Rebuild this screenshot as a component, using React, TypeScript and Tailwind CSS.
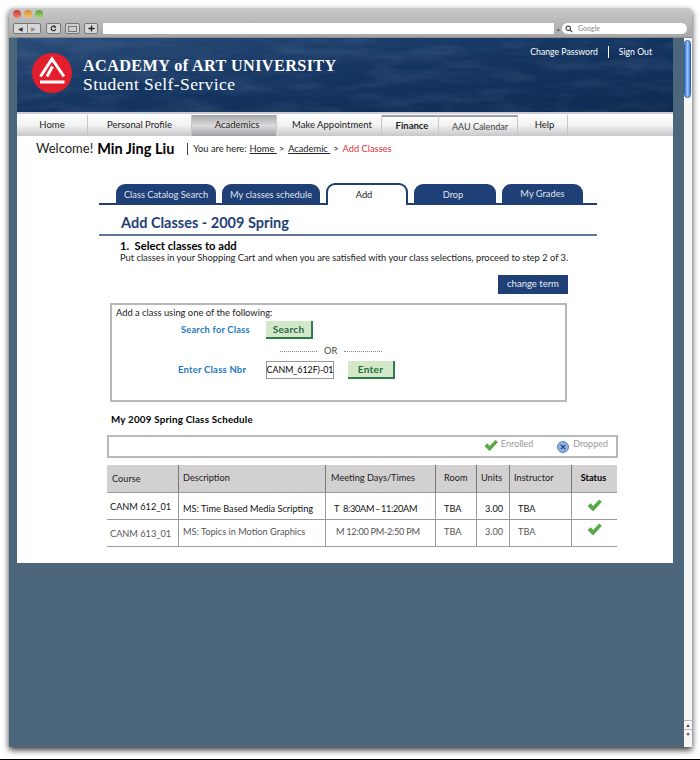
import * as React from 'react'

const sans = "font-['Lato',sans-serif]"

const navItems = [
  {label: 'Home', width: 'w-[71px]', className: ''},
  {label: 'Personal Profile', width: 'w-[104px]', className: ''},
  {label: 'Academics', width: 'w-[85px]', className: 'pl-[6px] bg-gradient-to-b from-[#a4a4a8] via-[#dcdcde] to-[#a0a0a4]'},
  {label: 'Make Appointment', width: 'w-[105px]', className: 'pl-[6px]'},
  {label: 'Finance', width: 'w-[57px]', className: 'pl-[4px] border-t-2 border-t-[#a0a0a0] font-bold'},
  {label: 'AAU Calendar', width: 'w-[79px]', className: 'pl-[4px] text-[9px] border-t-2 border-t-[#a0a0a0] text-[#444]'},
  {label: 'Help', width: 'w-[50px]', className: 'pl-[4px]'},
]

const tabs = [
  {label: 'Class Catalog Search', className: 'w-[100px] pt-[2px]'},
  {label: 'My classes schedule', className: 'w-[98px] pt-[2px]'},
  {label: 'Add', className: 'w-[82px] pr-[6px]', active: true},
  {label: 'Drop', className: 'w-[82px] pt-[3px] pr-[4px]'},
  {label: 'My Grades', className: 'w-[81px]'},
]

function Check({className}: {className?: string}) {
  return (
    <svg viewBox="0 0 16 14" className={className}>
      <path d="M1 7.5 L4 5 L6.5 8 L13 1 L15.5 3 L6.5 13 Z" fill="#55ad3f" stroke="#3b8a35" strokeWidth="0.6" />
    </svg>
  )
}

function GreenButton({label, className}: {label: string; className: string}) {
  return (
    <div
      className={`flex items-center justify-center border-b-2 border-r-2 border-[#2e7d4d] bg-[#d3e8c8] text-[10px] font-bold tracking-[0.3px] text-[#1f6b42] ${className}`}
    >
      {label}
    </div>
  )
}

function Row({
  cells,
  className,
  checkClassName,
}: {
  cells: [string, string, string, string, string, string]
  className: string
  checkClassName: string
}) {
  return (
    <div className={`flex h-[27px] items-center whitespace-pre border-t border-[#9a9a9a] text-[9.2px] ${className}`}>
      <div className="w-[71px] pl-[3px]">{cells[0]}</div>
      <div className="h-full w-[147px] border-l border-[#9a9a9a] pl-[4px]">{cells[1]}</div>
      <div className="h-full w-[110px] border-l border-[#9a9a9a] pl-[8px] tracking-[-0.3px]">{cells[2]}</div>
      <div className="h-full w-[41px] border-l border-[#9a9a9a] pl-[8px]">{cells[3]}</div>
      <div className="h-full w-[33px] border-l border-[#9a9a9a] pl-[8px]">{cells[4]}</div>
      <div className="h-full w-[62px] border-l border-[#9a9a9a] pl-[8px]">{cells[5]}</div>
      <div className={`flex h-full flex-1 items-center justify-center border-l border-[#9a9a9a] ${checkClassName}`}>
        <Check className="h-[13px] w-[15px]" />
      </div>
    </div>
  )
}

export default function App() {
  return (
    <div className={`h-[760px] w-[700px] overflow-hidden border-b border-black bg-white pl-[9px] pt-[8px] ${sans}`}>
      <div className="flex h-[739px] w-[683px] flex-col rounded-t-[4px] shadow-[0_3px_6px_rgba(0,0,0,0.8)]">
        <div className="flex h-[30px] shrink-0 flex-col justify-between rounded-t-[4px] border-b border-[#8a8a8a] bg-gradient-to-b from-[#c9c9c9] to-[#a8a8a8] pb-[3px] pl-[4px] pt-[2px]">
          <div className="flex gap-[3px]">
            <span className="h-[8px] w-[8px] rounded-full bg-gradient-to-b from-[#c9302a] to-[#f0837a]" />
            <span className="h-[8px] w-[8px] rounded-full bg-gradient-to-b from-[#d58a26] to-[#f3c56a]" />
            <span className="h-[8px] w-[8px] rounded-full bg-gradient-to-b from-[#55a32f] to-[#a5d97a]" />
          </div>
          <div className="flex items-center">
            <div className="flex h-[11px] w-[28px] rounded-[2px] border border-[#777] bg-[#d8d8d8] text-[#333]">
              <span className="flex-1 border-r border-[#888] text-center text-[6px] leading-[9px]">◀</span>
              <span className="flex-1 text-center text-[6px] leading-[9px] text-[#888]">▶</span>
            </div>
            <div className="ml-[5px] flex h-[11px] w-[15px] items-center justify-center rounded-[2px] border border-[#777] bg-[#d8d8d8]">
              <svg viewBox="0 0 10 10" className="h-[7px] w-[7px]">
                <path d="M7.6 2.8 A3.3 3.3 0 1 0 8.3 5.4" fill="none" stroke="#222" strokeWidth="1.6" />
                <path d="M6 0.5 L9 3.5 L5.5 4 Z" fill="#222" />
              </svg>
            </div>
            <div className="ml-[4px] flex h-[11px] w-[15px] items-center justify-center rounded-[2px] border border-[#777] bg-[#cfcfcf]">
              <div className="h-[6px] w-[9px] border border-[#777]" />
            </div>
            <div className="ml-[4px] flex h-[11px] w-[14px] items-center justify-center rounded-[2px] border border-[#777] bg-[#d8d8d8]">
              <svg viewBox="0 0 8 8" className="h-[7px] w-[7px]">
                <path d="M4 0.5 V7.5 M0.5 4 H7.5" stroke="#222" strokeWidth="1.5" />
              </svg>
            </div>
            <div className="ml-[5px] h-[11px] w-[451px] bg-white" />
            <div className="w-[8px] text-center text-[5px] leading-[6px] text-[#444]">▴</div>
            <div className="flex h-[11px] w-[125px] items-center rounded-full bg-white pl-[3px] text-[7px] text-[#888]">
              <svg viewBox="0 0 10 10" className="h-[8px] w-[8px]">
                <circle cx="4" cy="4" r="2.8" fill="none" stroke="#333" strokeWidth="1.3" />
                <path d="M6 6 L9 9" stroke="#333" strokeWidth="1.5" />
              </svg>
              <span className="ml-[5px]">Google</span>
            </div>
          </div>
        </div>

        <div className="flex min-h-0 flex-1 bg-[#4c677c]">
          <div className="ml-[8px] w-[656px] shrink-0">
            <div className="relative h-[76px] overflow-hidden border-b-2 border-[#c8ccd2] bg-gradient-to-br from-[#2a4c78] via-[#143460] to-[#0e2a50]">
              <svg className="absolute inset-0 h-full w-full opacity-15" aria-hidden="true">
                <filter id="water">
                  <feTurbulence type="fractalNoise" baseFrequency="0.02 0.09" numOctaves="4" seed="7" />
                  <feColorMatrix values="0 0 0 0 0.55  0 0 0 0 0.7  0 0 0 0 0.9  0 0 0 1.4 -0.55" />
                </filter>
                <rect width="100%" height="100%" filter="url(#water)" />
              </svg>
              <div className="relative flex items-center pl-[15px] pt-[15px]">
                <svg viewBox="0 0 40 40" className="h-[40px] w-[40px]">
                  <circle cx="20" cy="20" r="20" fill="#e31e2d" />
                  <path d="M8.5 23.5 L20 6 L32 23.5" fill="none" stroke="#fff" strokeWidth="3" />
                  <path d="M20.5 13.5 L15 23.5" fill="none" stroke="#fff" strokeWidth="3" />
                  <rect x="8" y="27.5" width="24.5" height="3" fill="#fff" />
                </svg>
                <div className="ml-[11px] pt-[2px] font-['Liberation_Serif',serif] text-white">
                  <div className="text-[16.2px] font-bold leading-[20px] tracking-[0.4px]">ACADEMY of ART UNIVERSITY</div>
                  <div className="text-[17.5px] leading-[17px] tracking-[0.4px]">Student Self-Service</div>
                </div>
              </div>
              <div className="absolute right-[21px] top-[7px] flex items-center text-[8.7px] text-white">
                <span>Change Password</span>
                <span className="mx-[10px] h-[12px] w-px bg-white" />
                <span>Sign Out</span>
              </div>
            </div>

            <div className="bg-white">
              <div className="flex h-[22px] bg-gradient-to-b from-[#ffffff] via-[#f2f2f3] to-[#c8c8ca] pt-px text-[9.5px] text-[#222]">
                {navItems.map(item => (
                  <div
                    key={item.label}
                    className={`flex items-center justify-center border-r border-[#c9c9c9] ${item.width} ${item.className}`}
                  >
                    {item.label}
                  </div>
                ))}
              </div>

              <div className="flex h-[24px] items-center pl-[19px] pt-[1px] text-[#222]">
                <span className="text-[13px]">Welcome!</span>
                <span className="ml-[4px] text-[14.5px] font-bold text-black">Min Jing Liu</span>
                <span className="ml-[13px] h-[12px] w-px bg-[#444]" />
                <span className="ml-[5px] text-[9.3px]">You are here:</span>
                <span className="ml-[3px] text-[9.3px] underline">Home&nbsp;</span>
                <span className="ml-[2px] text-[9.3px]">&gt;</span>
                <span className="ml-[4px] text-[9.3px] underline">Academic&nbsp;</span>
                <span className="ml-[3px] text-[9.3px]">&gt;</span>
                <span className="ml-[4px] text-[9.3px] text-[#d9323c]">Add Classes</span>
              </div>

              <div className="h-[403px] pl-[82px] pt-[24px]">
                <div className="flex h-[21px] w-[498px] items-end gap-[6px] border-b-2 border-[#1f3f77] pl-[17px]">
                  {tabs.map(tab =>
                    tab.active ? (
                      <div
                        key={tab.label}
                        className={`-mb-[2px] flex h-[22px] items-center justify-center rounded-t-[9px] border-2 border-b-0 border-[#1f3f77] bg-white text-[9.3px] text-[#222] ${tab.className}`}
                      >
                        {tab.label}
                      </div>
                    ) : (
                      <div
                        key={tab.label}
                        className={`flex h-[19px] items-center justify-center rounded-t-[9px] bg-[#1f3f77] text-[9.3px] text-[#dfe5ee] ${tab.className}`}
                      >
                        {tab.label}
                      </div>
                    ),
                  )}
                </div>
                <div className="pl-[22px] pt-[8px] text-[14.5px] font-bold leading-[20px] text-[#1f3f77]">Add Classes - 2009 Spring</div>
                <div className="mt-[1px] h-[2px] w-[498px] bg-[#5f7799]" />
                <div className="pl-[21px] pt-[3px] text-[11.2px] font-bold leading-[13px] text-black">1.&nbsp; Select classes to add</div>
                <div className="pl-[21px] text-[9.3px] leading-[12px] text-[#222]">
                  Put classes in your Shopping Cart and when you are satisfied with your class selections, proceed to step 2 of 3.
                </div>
                <div className="ml-[399px] mt-[11px] flex h-[19px] w-[70px] items-center justify-center bg-[#1f3f77] text-[9.5px] text-[#e8ecf3]">
                  change term
                </div>

                <div className="ml-[11px] mt-[9px] h-[99px] w-[457px] border-2 border-[#b8b8b8] px-[4px] pt-[2px]">
                  <div className="text-[9.35px] leading-[12px] text-[#222]">Add a class using one of the following:</div>
                  <div className="mt-[2px] flex items-center">
                    <span className="ml-[65px] w-[85px] text-[9.3px] font-bold tracking-[0.2px] text-[#1d79bd]">Search for Class</span>
                    <GreenButton label="Search" className="h-[18px] w-[47px]" />
                  </div>
                  <div className="ml-[164px] mt-[6px] flex items-center text-[9.3px] leading-[12px] text-[#444]">
                    <span className="w-[37px] border-t border-dotted border-[#888]" />
                    <span className="mx-[7px]">OR</span>
                    <span className="w-[38px] border-t border-dotted border-[#888]" />
                  </div>
                  <div className="mt-[4px] flex items-center">
                    <span className="ml-[62px] w-[88px] text-[9.5px] font-bold tracking-[0.2px] text-[#1d79bd]">Enter Class Nbr</span>
                    <div className="flex h-[18px] w-[68px] items-center justify-center border border-[#999] text-[8.8px] text-black">
                      CANM_612F)-01
                    </div>
                    <GreenButton label="Enter" className="ml-[14px] h-[18px] w-[47px]" />
                  </div>
                </div>

                <div className="pl-[12px] pt-[11px] text-[9.8px] font-bold leading-[12px] tracking-[0.2px] text-black">My 2009 Spring Class Schedule</div>
                <div className="ml-[8px] mt-[10px] flex h-[23px] w-[511px] items-start justify-end border-2 border-[#b8b8b8] pr-[8px] pt-[1px] text-[9px] leading-[11px] text-[#999]">
                  <Check className="mt-[1px] h-[13px] w-[14px]" />
                  <span className="ml-[3px]">Enrolled</span>
                  <svg viewBox="0 0 12 12" className="ml-[24px] mt-[3px] h-[12px] w-[12px]">
                    <circle cx="6" cy="6" r="5.5" fill="#8fb2e0" stroke="#5d83bb" />
                    <path d="M3.8 3.8 L8.2 8.2 M8.2 3.8 L3.8 8.2" stroke="#1f3f77" strokeWidth="1.2" />
                  </svg>
                  <span className="ml-[4px]">Dropped</span>
                </div>

                <div className="ml-[8px] mt-[7px] w-[510px] border-b border-[#9a9a9a]">
                  <div className="flex h-[27px] items-center bg-[#d2d0d1] text-[9.2px] leading-[26px] text-[#222]">
                    <div className="w-[71px] pl-[5px]">Course</div>
                    <div className="h-full w-[147px] border-l border-[#777] pl-[4px]">Description</div>
                    <div className="h-full w-[110px] border-l border-[#777] pl-[5px]">Meeting Days/Times</div>
                    <div className="h-full w-[41px] border-l border-[#777] pl-[8px]">Room</div>
                    <div className="h-full w-[33px] border-l border-[#777] pl-[4px]">Units</div>
                    <div className="h-full w-[62px] border-l border-[#777] pl-[4px]">Instructor</div>
                    <div className="h-full flex-1 border-l border-[#777] pr-[2px] text-center font-bold text-black">Status</div>
                  </div>
                  <Row
                    cells={['CANM 612_01', 'MS: Time Based Media Scripting', 'T  8:30AM\u2009–\u200911:20AM', 'TBA', '3.00', 'TBA']}
                    className="leading-[31px] text-[#111]"
                    checkClassName="pb-[2px]"
                  />
                  <Row
                    cells={['CANM 613_01', 'MS: Topics in Motion Graphics', ' M 12:00 PM-2:50 PM', 'TBA', '3.00', 'TBA']}
                    className="leading-[23px] text-[#555]"
                    checkClassName="pb-[8px]"
                  />
                </div>
              </div>
            </div>
          </div>

          <div className="ml-[11px] flex w-[8px] shrink-0 flex-col bg-[#f6f6f6] pt-[2px]">
            <div className="h-[58px] w-[7px] rounded-full border border-[#2c62b3] bg-gradient-to-r from-[#3f7fdc] via-[#9cc3f5] to-[#3f7fdc]" />
            <div className="mt-auto h-[27px] text-center text-[5px] leading-[8px] text-[#333]">
              <div className="border-t border-[#bbb]">▲</div>
              <div className="border-t border-[#bbb]">▼</div>
            </div>
          </div>
        </div>
      </div>
    </div>
  )
}
